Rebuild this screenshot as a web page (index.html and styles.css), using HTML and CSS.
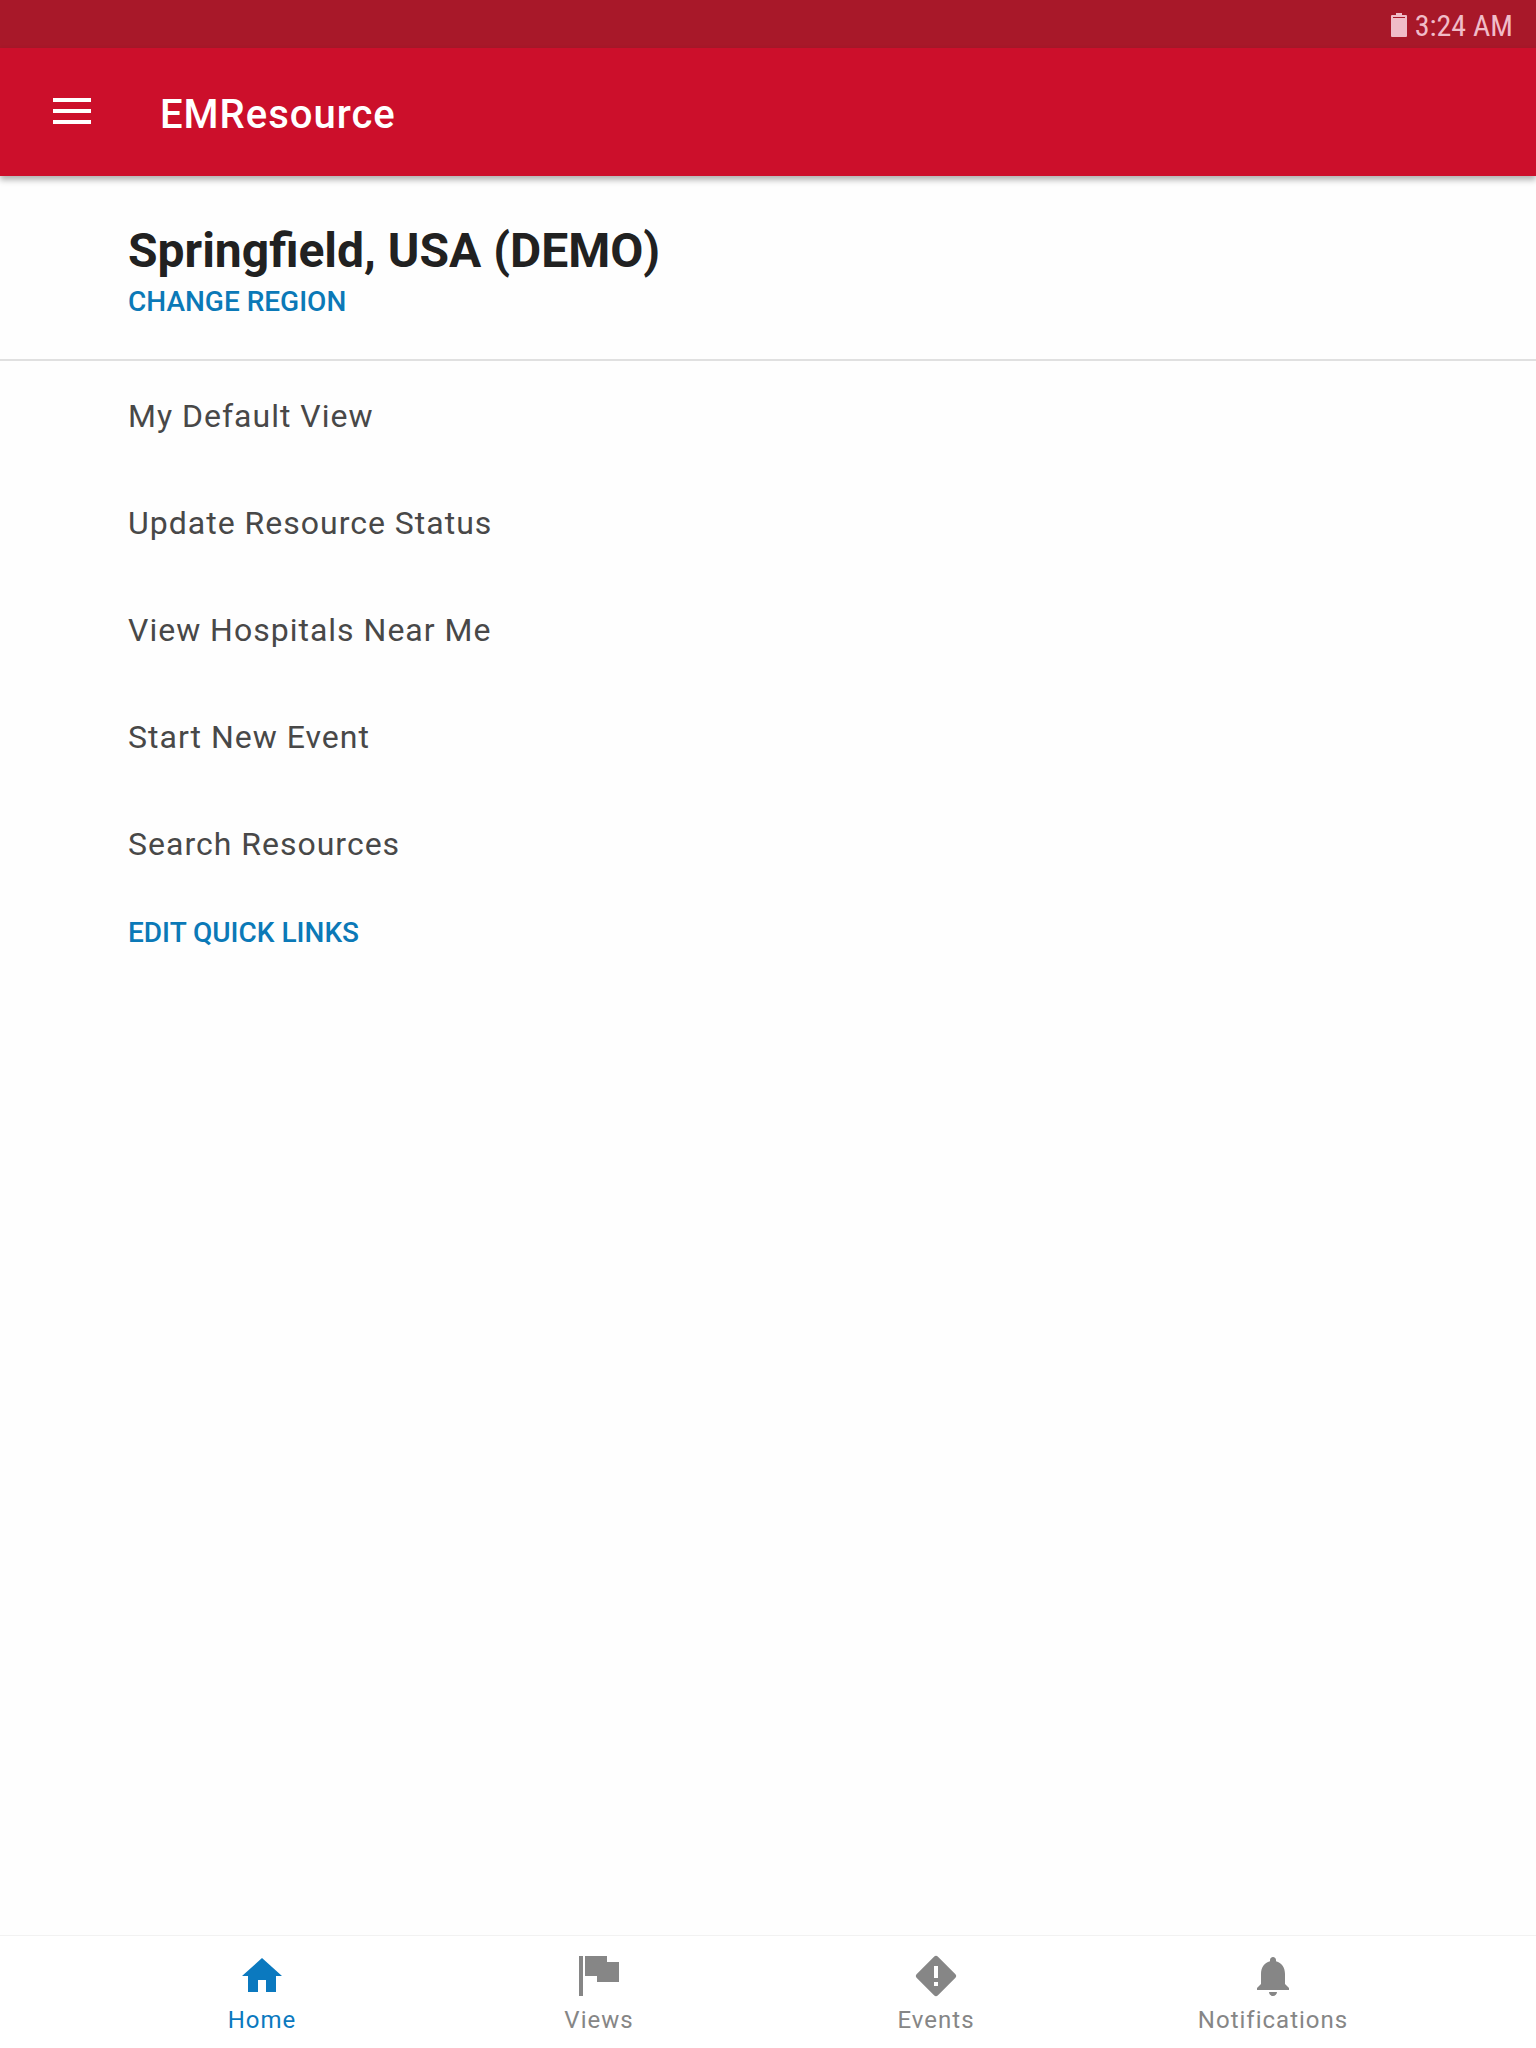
FILE: index.html
```
<!DOCTYPE html>
<html lang="en">
  <head>
    <meta charset="UTF-8" />
    <meta name="viewport" content="width=device-width, initial-scale=1.0" />
    <title>EMResource</title>
    <link rel="stylesheet" href="styles.css">
  </head>
  <body>
    <div class="status-bar">
      <svg class="battery" viewBox="0 0 16 24" aria-hidden="true">
        <path d="M5 0h6v2h4q1 0 1 1v1H0V3q0-1 1-1h4z" />
        <path d="M0 4h2v1h12V4h2v19q0 1-1 1H1q-1 0-1-1z" />
      </svg>
      <span class="time">3:24 AM</span>
    </div>

    <header class="app-bar">
      <button class="menu-button" aria-label="Open menu">
        <svg viewBox="0 0 38 26">
          <path d="M0 0h38v4H0zM0 11h38v4H0zM0 22h38v4H0z" />
        </svg>
      </button>
      <div class="app-title">EMResource</div>
    </header>

    <main>
      <section class="region">
        <h1>Springfield, USA (DEMO)</h1>
        <a href="#" class="action">CHANGE REGION</a>
      </section>

      <section class="quick-links">
        <ul>
          <li><a href="#">My Default View</a></li>
          <li><a href="#">Update Resource Status</a></li>
          <li><a href="#">View Hospitals Near Me</a></li>
          <li><a href="#">Start New Event</a></li>
          <li><a href="#">Search Resources</a></li>
        </ul>
        <a href="#" class="action">EDIT QUICK LINKS</a>
      </section>
    </main>

    <nav class="tab-bar">
      <a href="#" class="tab active">
        <svg viewBox="0 0 24 24">
          <path d="M10 20v-6h4v6h5v-8h3L12 3 2 12h3v8z" />
        </svg>
        <span>Home</span>
      </a>
      <a href="#" class="tab">
        <svg viewBox="0 0 24 24">
          <path d="M2 2h2v20H2zM5 2h11v3h6v10H11v-3H5z" />
        </svg>
        <span>Views</span>
      </a>
      <a href="#" class="tab">
        <svg viewBox="0 0 24 24">
          <path
            fill-rule="evenodd"
            d="M13 2.4l8.600 8.600q1 1 0 2L13 21.600q-1 1-2 0L2.400 13q-1-1 0-2L11 2.400q1-1 2 0zM11 7v6h2V7zM11 15v2h2v-2z"
          />
        </svg>
        <span>Events</span>
      </a>
      <a href="#" class="tab">
        <svg viewBox="0 0 24 24">
          <path
            d="M12 22c1.100 0 2-.9 2-2h-4c0 1.100.89 2 2 2zm6-6v-5c0-3.070-1.640-5.640-4.500-6.320V4c0-.83-.67-1.500-1.500-1.500s-1.500.67-1.500 1.500v.68C7.630 5.360 6 7.920 6 11v5l-2 2v1h16v-1l-2-2z"
          />
        </svg>
        <span>Notifications</span>
      </a>
    </nav>
  </body>
</html>
```
FILE: styles.css
```
* {
  box-sizing: border-box;
}
body {
  margin: 0;
  min-height: 100vh;
  display: flex;
  flex-direction: column;
  font-family: "Roboto", sans-serif;
  color: #212121;
  background-color: #fefefe;
}
a {
  text-decoration: none;
}
svg {
  display: block;
  fill: currentColor;
}

.status-bar {
  display: flex;
  align-items: center;
  justify-content: flex-end;
  gap: 8px;
  height: 48px;
  padding: 2px 23px 0;
  color: #f0bcc8;
  background-color: #a81829;
}
.battery {
  width: 16px;
  height: 24px;
}
.time {
  font-family: "Roboto Condensed", "Roboto", sans-serif;
  font-size: 30px;
}

.app-bar {
  display: flex;
  align-items: center;
  gap: 69px;
  height: 128px;
  padding: 0 53px 2px;
  color: #fff;
  background-color: #cc0f2b;
  box-shadow: 0 4px 6px rgba(0, 0, 0, 0.3);
}
.menu-button {
  padding: 0;
  border: none;
  color: inherit;
  background: none;
  cursor: pointer;
}
.menu-button svg {
  width: 38px;
  height: 26px;
}
.app-title {
  padding-top: 6px;
  font-size: 40px;
  font-weight: 500;
  letter-spacing: 1px;
}

main {
  flex: 1;
}
.region {
  padding: 45px 128px 36px;
  border-bottom: 2px solid #e0e0e0;
}
.region h1 {
  margin: 0;
  font-size: 48px;
  font-weight: 700;
  line-height: 60px;
}
.action {
  display: block;
  width: fit-content;
  font-size: 28px;
  font-weight: 500;
  line-height: 42px;
  color: #0b79b7;
}
.quick-links {
  padding: 2px 128px;
}
.quick-links ul {
  margin: 0 0 14px;
  padding: 0;
  list-style: none;
}
.quick-links li a {
  display: block;
  font-size: 32px;
  line-height: 107px;
  letter-spacing: 1px;
  color: #484848;
}

.tab-bar {
  display: grid;
  grid-template-columns: repeat(4, 1fr);
  padding: 16px 94px 12px;
  border-top: 1px solid #f2f2f2;
  background-color: #fff;
}
.tab {
  display: flex;
  flex-direction: column;
  align-items: center;
  gap: 4px;
  padding-right: 1px;
  font-size: 24px;
  line-height: 32px;
  letter-spacing: 1px;
  color: #868686;
}
.tab svg {
  width: 48px;
  height: 48px;
}
.tab.active {
  color: #0b79bf;
}
```
